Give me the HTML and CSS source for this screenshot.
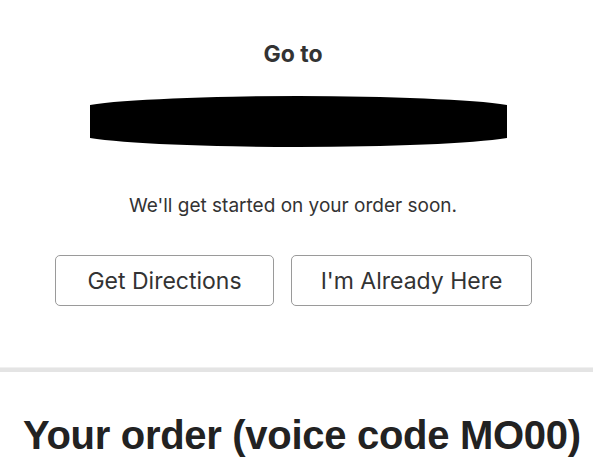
FILE: index.html
```html
<!DOCTYPE html>
<html>
<head>
<meta charset="utf-8">
<link rel="stylesheet" href="styles.css">
</head>
<body>
<section class="pickup">
  <h2 class="goto">Go to</h2>
  <svg class="redact" width="417" height="52" viewBox="0 0 417 52"><path d="M0,9 A225,14.4 0 0 1 417,9 L417,42 A225,14.4 0 0 1 0,42 Z" fill="#000"/></svg>
  <p class="note">We'll get started on your order soon.</p>
  <div class="actions">
    <button class="btn btn-dir">Get Directions</button>
    <button class="btn btn-here">I'm Already Here</button>
  </div>
</section>
<div class="divider"></div>
<h1 class="order">Your order (voice code MO00)</h1>
</body>
</html>
```
FILE: styles.css
```css
html, body { margin: 0; padding: 0; background: #fff; }
body { font-family: Inter, "Liberation Sans", Arial, sans-serif; color: #333; width: 593px; height: 470px; overflow: hidden; }
.pickup { display: flex; flex-direction: column; align-items: center; padding-top: 41px; }
.goto { margin: 0; font-size: 23px; font-weight: 700; color: #333; line-height: 26px; margin-left: -7px; }
.redact { display: block; margin-top: 29px; margin-left: 3px; }
.note { margin: 47px 0 0; font-size: 19px; line-height: 22px; color: #333; margin-left: -7px; }
.actions { display: flex; gap: 17px; margin-top: 38px; margin-left: -6px; }
.btn { font-family: Inter, "Liberation Sans", Arial, sans-serif; font-size: 23px; color: #333; background: #fff; border: 1.5px solid #9a9a9a; border-radius: 5px; height: 51px; padding: 0 0 0; }
.btn-dir { width: 219px; }
.btn-here { width: 241px; }
.divider { margin-top: 61px; height: 4px; background: #e4e4e4; border-top: 1px solid #f0f0f0; }
.order { margin: 40px 0 0 23px; font-family: "Liberation Sans", Arial, sans-serif; font-size: 40px; line-height: 46px; font-weight: bold; color: #222; letter-spacing: -0.3px; white-space: nowrap; }
```
